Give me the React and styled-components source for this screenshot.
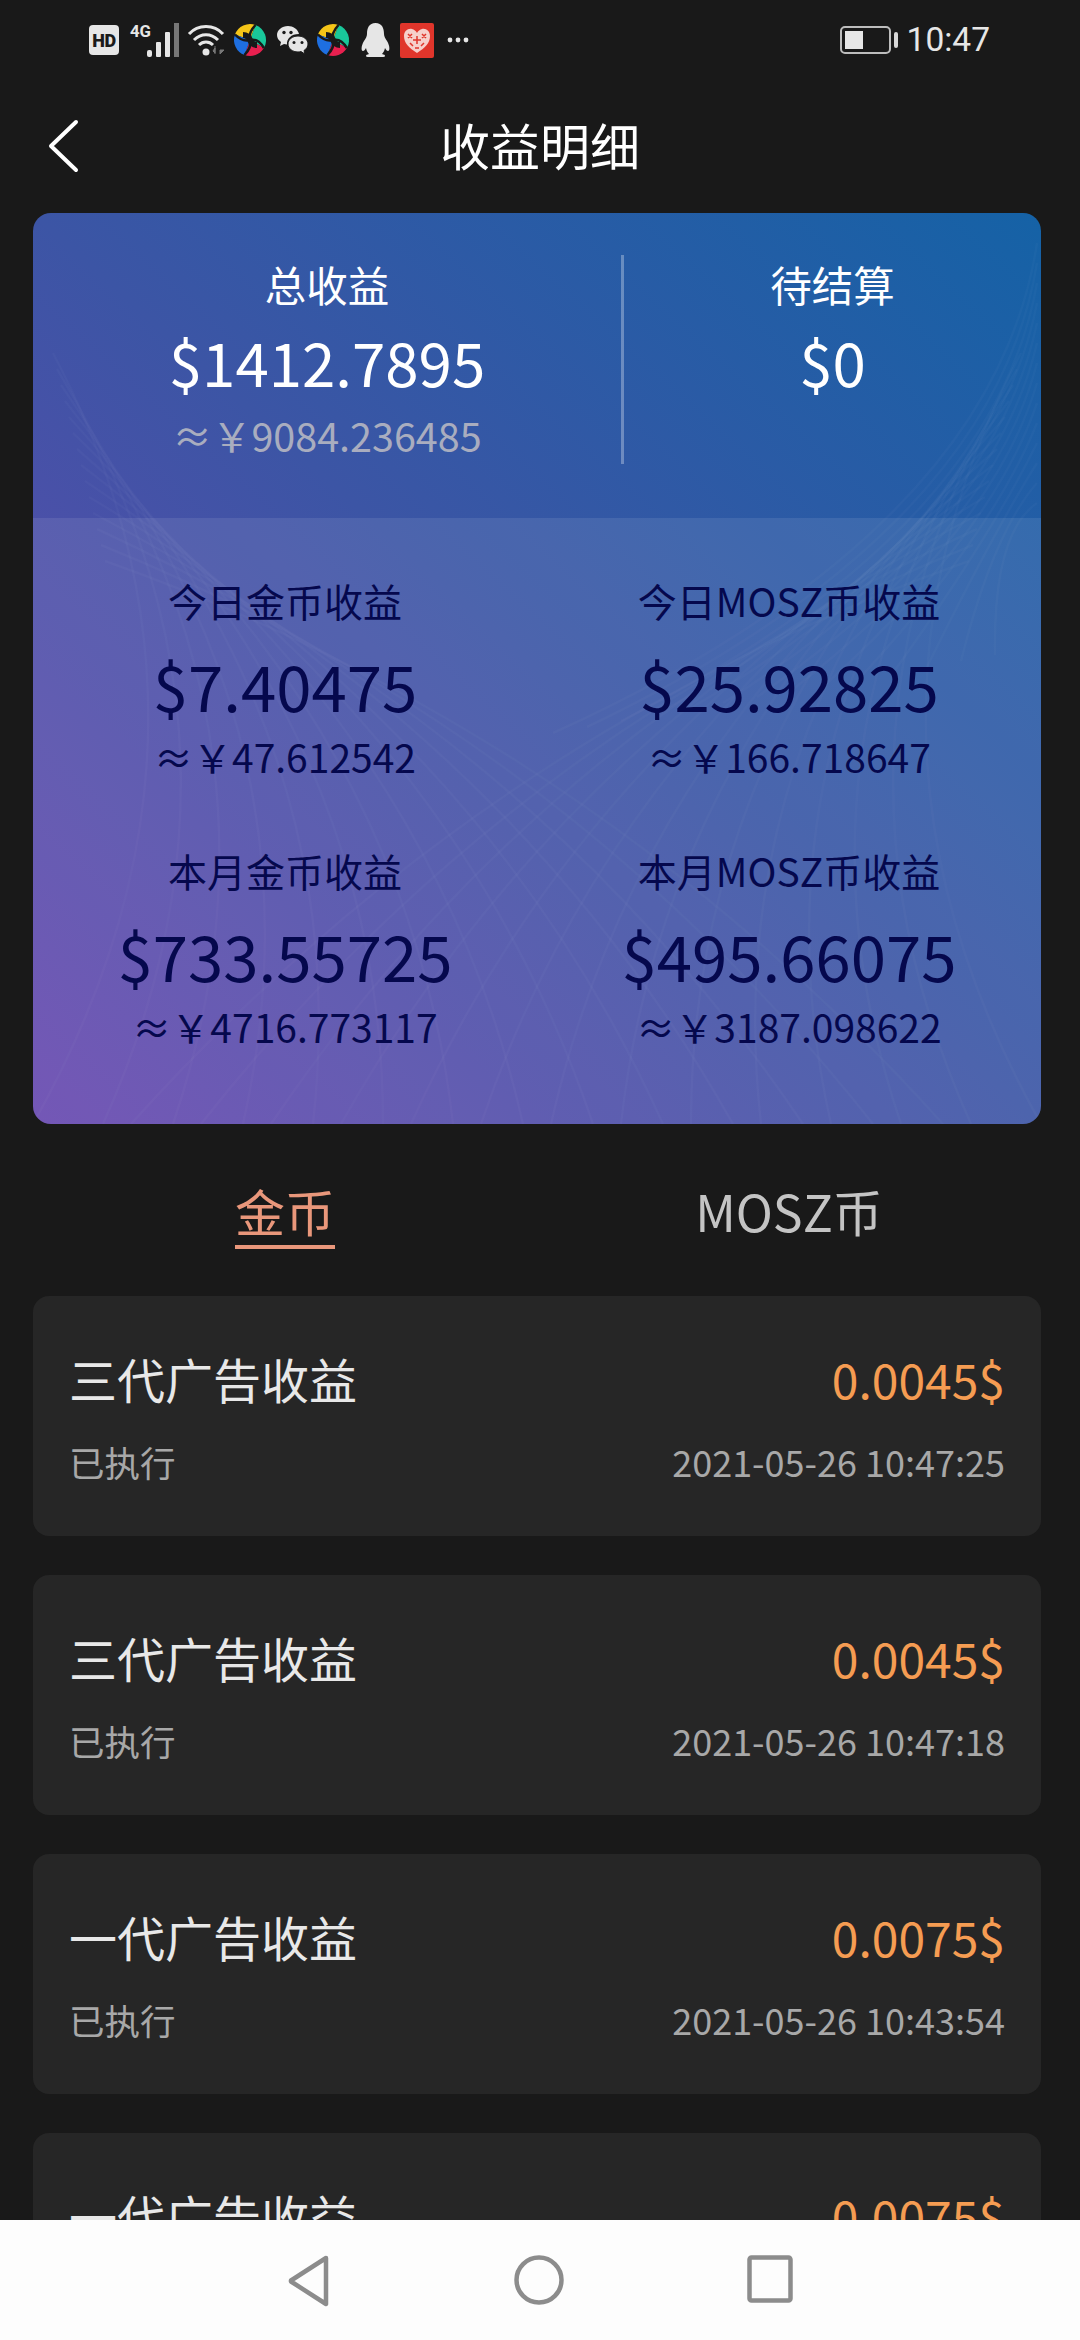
import React from 'react';
import styled, { createGlobalStyle } from 'styled-components';

const cjk = '"Noto Sans CJK SC", "Noto Sans", sans-serif';

const GlobalStyle = createGlobalStyle`
  html, body { margin: 0; padding: 0; background: #191919; }
  * { box-sizing: border-box; }
`;

const Screen = styled.div`
  width: 1080px;
  height: 2340px;
  display: flex;
  flex-direction: column;
  overflow: hidden;
  background: #191919;
  font-family: ${cjk};
`;

const StatusBar = styled.div`
  height: 80px;
  flex: none;
  display: flex;
  align-items: center;
  padding: 0 90px 0 89px;
`;

const StatusIcons = styled.div`
  display: flex;
  align-items: center;
  flex: 1;
`;

const StatusIcon = styled.svg`
  display: block;
  flex: none;
  overflow: visible;
  margin-left: ${(p) => p.$gap || 0}px;
`;

const HdBadge = styled.div`
  width: 30px;
  height: 30px;
  flex: none;
  border-radius: 4px;
  background: #e6e6e6;
  color: #1a1a1a;
  display: flex;
  align-items: center;
  justify-content: center;
  font-family: Roboto, sans-serif;
  font-weight: 900;
  font-size: 18px;
  letter-spacing: -0.5px;
`;

const Battery = styled.div`
  width: 51px;
  height: 28px;
  border: 2px solid #bdbdbd;
  border-radius: 5px;
  padding: 3px;
  position: relative;
  &::after {
    content: '';
    position: absolute;
    right: -9px;
    top: 4px;
    width: 4px;
    height: 16px;
    border-radius: 2px;
    background: #d8d8d8;
  }
`;

const BatteryLevel = styled.div`
  width: 18px;
  height: 100%;
  background: #e6e6e6;
`;

const Clock = styled.div`
  margin-left: 16px;
  font-family: Roboto, sans-serif;
  font-size: 33.5px;
  line-height: 40px;
  color: #e6e6e6;
`;

const TitleBar = styled.div`
  height: 133px;
  flex: none;
  position: relative;
  display: flex;
  align-items: center;
  justify-content: center;
  padding-bottom: 6px;
  font-size: 50px;
  color: #fff;
`;

const BackArrow = styled.svg`
  position: absolute;
  left: 46px;
  top: 39px;
`;

const Body = styled.div`
  flex: 1;
  min-height: 0;
  overflow: hidden;
  padding: 0 39px 0 33px;
`;

const SummaryCard = styled.div`
  position: relative;
  height: 911px;
  border-radius: 18px;
  overflow: hidden;
  background: linear-gradient(to top right, #6747af 0%, #3c55a5 50%, #1562a6 100%);
`;

const Lines = styled.svg`
  position: absolute;
  inset: 0;
  width: 100%;
  height: 100%;
`;

const TotalSection = styled.div`
  position: relative;
  height: 305px;
  display: grid;
  grid-template-columns: 591px 1fr;
  padding-top: 42px;
`;

const TotalColumn = styled.div`
  height: 209px;
  display: flex;
  flex-direction: column;
  align-items: center;
  border-right: ${(p) => (p.$divided ? '3px solid rgba(255, 255, 255, 0.3)' : 'none')};
`;

const TotalLabel = styled.div`
  font-size: 41.5px;
  line-height: 44px;
  margin-top: 7px;
  color: #fff;
`;

const TotalValue = styled.div`
  font-size: 60px;
  line-height: 74px;
  margin-top: 18px;
  color: #fff;
`;

const TotalSub = styled.div`
  font-size: 39.5px;
  line-height: 46px;
  margin-top: 14px;
  color: #a9adbf;
`;

const StatsSection = styled.div`
  position: relative;
  height: 606px;
  background: rgba(255, 255, 255, 0.09);
  display: grid;
  grid-template-columns: 504px 504px;
  grid-auto-rows: 270px;
  padding-top: 57px;
`;

const Stat = styled.div`
  display: flex;
  flex-direction: column;
  align-items: center;
  color: #05084d;
`;

const StatLabel = styled.div`
  font-size: 39px;
  line-height: 50px;
`;

const StatValue = styled.div`
  font-size: 63.5px;
  line-height: 78px;
  margin-top: 20px;
`;

const StatSub = styled.div`
  font-size: 39px;
  line-height: 46px;
  margin-top: 10px;
`;

const Tabs = styled.div`
  display: grid;
  grid-template-columns: 504px 504px;
  height: 172px;
`;

const Tab = styled.div`
  display: flex;
  justify-content: center;
  padding-top: 53px;
`;

const TabText = styled.div`
  height: 72px;
  font-size: 50px;
  line-height: 66px;
  color: ${(p) => (p.$active ? '#e9977b' : '#c4c4c4')};
  border-bottom: ${(p) => (p.$active ? '4px solid #e9977b' : 'none')};
`;

const List = styled.div`
  display: flex;
  flex-direction: column;
  gap: 39px;
`;

const Record = styled.div`
  flex: none;
  height: 240px;
  border-radius: 16px;
  background: #262626;
  padding: 42px 36px 0 36px;
`;

const RecordRow = styled.div`
  display: flex;
  justify-content: space-between;
  align-items: center;
  height: ${(p) => p.$height}px;
`;

const RecordTitle = styled.div`
  font-size: 48px;
  color: #e8e8e8;
`;

const RecordAmount = styled.div`
  font-size: 48px;
  color: #f59c52;
`;

const RecordStatus = styled.div`
  font-size: 35.5px;
  color: #a8a8a8;
`;

const RecordTime = styled.div`
  font-size: 36px;
  color: #a8a8a8;
`;

const NavBar = styled.div`
  height: 120px;
  flex: none;
  background: #fdfdfd;
  display: flex;
  align-items: flex-start;
  justify-content: center;
  gap: 183px;
  padding-top: 35px;
`;

const totals = [
  { label: '总收益', value: '$1412.7895', sub: '≈￥9084.236485', divided: true },
  { label: '待结算', value: '$0' },
];

const stats = [
  { label: '今日金币收益', value: '$7.40475', sub: '≈￥47.612542' },
  { label: '今日MOSZ币收益', value: '$25.92825', sub: '≈￥166.718647' },
  { label: '本月金币收益', value: '$733.55725', sub: '≈￥4716.773117' },
  { label: '本月MOSZ币收益', value: '$495.66075', sub: '≈￥3187.098622' },
];

const records = [
  { title: '三代广告收益', amount: '0.0045$', time: '2021-05-26 10:47:25' },
  { title: '三代广告收益', amount: '0.0045$', time: '2021-05-26 10:47:18' },
  { title: '一代广告收益', amount: '0.0075$', time: '2021-05-26 10:43:54' },
  { title: '一代广告收益', amount: '0.0075$', time: '2021-05-26 10:43:47' },
];

const Pinwheel = ({ gap }) => (
  <StatusIcon $gap={gap} width="32" height="34" viewBox="0 0 32 34">
    <path d="M16 17 1 11.500A16 16 0 0 1 21.500 2Z" fill="#f5c518" />
    <path d="M16 17 21.500 2A16 16 0 0 1 29.900 25Z" fill="#19c79a" />
    <path d="M16 17 29.900 25A16 16 0 0 1 10.500 32Z" fill="#e8204f" />
    <path d="M16 17 10.500 32A16 16 0 0 1 1 11.500Z" fill="#1e6fe0" />
    <g fill="none" stroke="#191919" strokeWidth="2.500">
      <path d="M21.500 2Q14 10 16 17" />
      <path d="M29.900 25Q24 15 16 17" />
      <path d="M10.500 32Q18 24 16 17" />
      <path d="M1 11.500Q8 19 16 17" />
    </g>
    <path d="M9 12Q14 12 16 17 18 22 23 22" fill="none" stroke="#191919" strokeWidth="6" />
  </StatusIcon>
);

const CardLines = () => {
  const curves = [];
  for (let i = 0; i < 14; i++) {
    const t = i * 70;
    curves.push(`M${t} 911 Q${220 + i * 26} 520 ${20 + i * 4} ${140 + i * 16}`);
    curves.push(`M${1008 - t} 911 Q${788 - i * 26} 520 ${988 - i * 4} ${140 + i * 16}`);
    curves.push(`M${1004} ${30 + i * 20} Q${960} ${320} ${520 + i * 34} ${520 - i * 6}`);
  }
  return (
    <Lines viewBox="0 0 1008 911" preserveAspectRatio="none">
      {curves.map((d, i) => (
        <path key={i} d={d} fill="none" stroke="#fff" strokeOpacity="0.022" strokeWidth="2.5" />
      ))}
    </Lines>
  );
};

export default function App() {
  return (
    <Screen>
      <GlobalStyle />
      <StatusBar>
        <StatusIcons>
          <HdBadge>HD</HdBadge>
          <StatusIcon $gap={11} width="50" height="34" viewBox="0 0 50 34">
            <text x="0" y="14" fontFamily="Roboto, sans-serif" fontWeight="700" fontSize="17" fill="#e6e6e6" textLength="21" lengthAdjust="spacingAndGlyphs">4G</text>
            <rect x="17" y="27" width="5" height="7" rx="2" fill="#e6e6e6" />
            <rect x="26" y="19" width="5" height="15" rx="1" fill="#e6e6e6" />
            <rect x="35" y="9" width="5" height="25" rx="1" fill="#e6e6e6" />
            <rect x="44" y="0" width="5" height="34" fill="#777" />
          </StatusIcon>
          <StatusIcon $gap={8} width="38" height="32" viewBox="0 0 38 32">
            <path d="M1 10 C10 0 26 0 35 10" fill="none" stroke="#e6e6e6" strokeWidth="3" />
            <path d="M6 16 C13 9 23 9 30 16" fill="none" stroke="#e6e6e6" strokeWidth="3" />
            <path d="M11 21 C15 17 21 17 25 21" fill="none" stroke="#e6e6e6" strokeWidth="3" />
            <circle cx="18" cy="28" r="3.500" fill="#e6e6e6" />
            <path d="M27 22v8M32 30l4-4h-4ZM25 27l2-3v5Z" fill="#777" stroke="#777" />
          </StatusIcon>
          <Pinwheel gap={8} />
          <StatusIcon $gap={11} width="31" height="28" viewBox="0 0 31 28">
            <path d="M11 0C5 0 0 4 0 9c0 3 1.500 5 4 7l-1 4 4-2c1 .3 2 .4 3 .4C9.500 13 14 8 22 8 21 3 16 0 11 0Z" fill="#e6e6e6" />
            <circle cx="7" cy="6.500" r="1.700" fill="#1a1a1a" />
            <circle cx="14" cy="6.500" r="1.700" fill="#1a1a1a" />
            <path d="M21 10c-5.500 0-10 3.500-10 8s4.500 8 10 8c1 0 2-.1 3-.4l4 2.400-1-3.500c2.500-1.500 4-4 4-6.500 0-4.500-4.500-8-10-8Z" fill="#e6e6e6" stroke="#1a1a1a" />
            <circle cx="17" cy="16.500" r="1.500" fill="#1a1a1a" />
            <circle cx="25" cy="16.500" r="1.500" fill="#1a1a1a" />
          </StatusIcon>
          <Pinwheel gap={9} />
          <StatusIcon $gap={12} width="29" height="34" viewBox="0 0 29 34">
            <path d="M14.500 0C8 0 6 5 6 11 6 13 5 15 3 18 0 23 0 28 2 28c1 0 2-1 3-3 .5 3 2 5 3 6-2 .5-3 1-3 2 0 .6 1 1 3 1h13c2 0 3-.4 3-1 0-1-1-1.500-3-2 1-1 2.500-3 3-6 1 2 2 3 3 3 2 0 2-5-1-10-2-3-3-5-3-7 0-6-2-11-8.500-11Z" fill="#e6e6e6" />
          </StatusIcon>
          <StatusIcon $gap={10} width="34" height="35" viewBox="0 0 34 35">
            <rect width="34" height="35" rx="2" fill="#e0352b" />
            <path d="M17 30 C9 25 4 20 4 13 C4 8 8 5 12 6 C14 6.500 16 8 17 10 C18 8 20 6.500 22 6 C26 5 30 8 30 13 C30 20 25 25 17 30Z" fill="#f6cfcb" />
            <path d="M8 11l4 4M12 11l-4 4M22 11l4 4M26 11l-4 4M13 17h8M17 13v8M10 20l3 3M24 20l-3 3M15 25h4" stroke="#e0352b" strokeWidth="1.500" />
          </StatusIcon>
          <StatusIcon $gap={13} width="21" height="6" viewBox="0 0 21 6">
            <circle cx="3" cy="3" r="2.400" fill="#e6e6e6" />
            <circle cx="11" cy="3" r="2.400" fill="#e6e6e6" />
            <circle cx="19" cy="3" r="2.400" fill="#e6e6e6" />
          </StatusIcon>
        </StatusIcons>
        <Battery>
          <BatteryLevel />
        </Battery>
        <Clock>10:47</Clock>
      </StatusBar>

      <TitleBar>
        <BackArrow width="34" height="54" viewBox="0 0 34 54">
          <path d="M30 3 5 27l25 24" fill="none" stroke="#fff" strokeWidth="4" strokeLinecap="round" strokeLinejoin="round" />
        </BackArrow>
        收益明细
      </TitleBar>

      <Body>
        <SummaryCard>
          <CardLines />
          <TotalSection>
            {totals.map((item) => (
              <TotalColumn key={item.label} $divided={item.divided}>
                <TotalLabel>{item.label}</TotalLabel>
                <TotalValue>{item.value}</TotalValue>
                {item.sub && <TotalSub>{item.sub}</TotalSub>}
              </TotalColumn>
            ))}
          </TotalSection>
          <StatsSection>
            {stats.map((item) => (
              <Stat key={item.label}>
                <StatLabel>{item.label}</StatLabel>
                <StatValue>{item.value}</StatValue>
                <StatSub>{item.sub}</StatSub>
              </Stat>
            ))}
          </StatsSection>
        </SummaryCard>

        <Tabs>
          <Tab>
            <TabText $active>金币</TabText>
          </Tab>
          <Tab>
            <TabText>MOSZ币</TabText>
          </Tab>
        </Tabs>

        <List>
          {records.map((item) => (
            <Record key={item.time}>
              <RecordRow $height={80}>
                <RecordTitle>{item.title}</RecordTitle>
                <RecordAmount>{item.amount}</RecordAmount>
              </RecordRow>
              <RecordRow $height={86}>
                <RecordStatus>已执行</RecordStatus>
                <RecordTime>{item.time}</RecordTime>
              </RecordRow>
            </Record>
          ))}
        </List>
      </Body>

      <NavBar>
        <svg width="44" height="52" viewBox="0 0 44 52">
          <path d="M39 3 4 25.500a2 2 0 0 0 0 1L39 49Z" fill="none" stroke="#8c8c8c" strokeWidth="4.500" strokeLinejoin="round" />
        </svg>
        <svg width="50" height="50" viewBox="0 0 50 50">
          <circle cx="25" cy="25" r="22.500" fill="none" stroke="#8c8c8c" strokeWidth="4.500" />
        </svg>
        <svg width="46" height="48" viewBox="0 0 46 48">
          <rect x="2.500" y="2.500" width="41" height="43" rx="2" fill="none" stroke="#8c8c8c" strokeWidth="4.500" />
        </svg>
      </NavBar>
    </Screen>
  );
}
